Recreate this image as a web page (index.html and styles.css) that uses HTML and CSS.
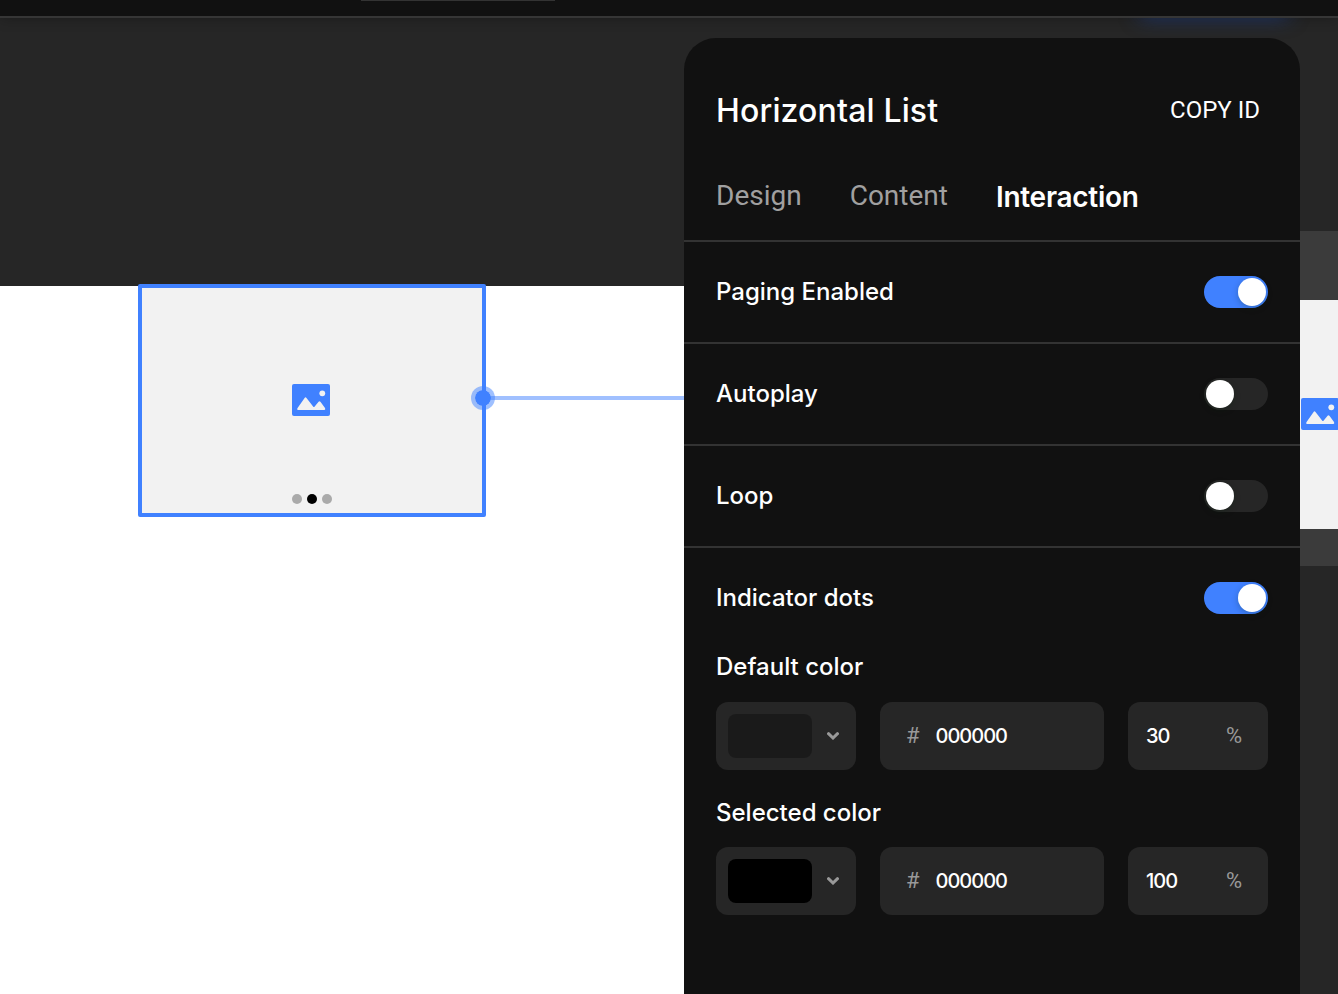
FILE: index.html
```html
<!DOCTYPE html>
<html lang="en">
<head>
<meta charset="utf-8">
<title>Horizontal List</title>
<link rel="stylesheet" href="styles.css">
</head>
<body>
<svg class="defs" width="0" height="0">
  <symbol id="picture" viewBox="0 0 38 32">
    <rect width="38" height="32" rx="2" fill="#4081ff"/>
    <circle cx="30.3" cy="9.3" r="2.9" fill="#f2f2f2"/>
    <path d="M6 26Q4.600 26 5.400 24.300L12.600 14Q13.500 12.700 14.500 14L21.300 22.800Q21.900 23.400 22.500 22.700L26.600 17.700Q27.500 16.700 28.400 17.700L33 24Q33.800 25.500 32.500 26Z" fill="#f2f2f2"/>
  </symbol>
  <symbol id="chevron" viewBox="0 0 12 8">
    <path d="M1.500 1.700L6 6L10.500 1.700" fill="none" stroke="#999" stroke-width="3" stroke-linecap="round"/>
  </symbol>
</svg>
<div class="app">
  <header class="topbar"><div class="topbar-field"></div></header>
  <main class="canvas">
    <div class="glow"></div>
    <div class="artboard"></div>
    <div class="list-frame">
      <svg class="picture"><use href="#picture"/></svg>
      <div class="dots"><i></i><i class="current"></i><i></i></div>
    </div>
    <div class="connector"></div>
    <div class="handle"></div>
    <div class="next-screen">
      <div class="next-item"><svg class="picture"><use href="#picture"/></svg></div>
    </div>
  </main>
  <aside class="panel">
    <div class="panel-head"><h1>Horizontal List</h1><button class="copy">COPY ID</button></div>
    <nav class="tabs">
      <span class="tab">Design</span><span class="tab">Content</span><span class="tab active">Interaction</span>
    </nav>
    <section class="row"><span class="label">Paging Enabled</span><span class="switch on"></span></section>
    <section class="row"><span class="label">Autoplay</span><span class="switch"></span></section>
    <section class="row"><span class="label">Loop</span><span class="switch"></span></section>
    <section class="row"><span class="label">Indicator dots</span><span class="switch on"></span></section>
    <section class="color">
      <h2>Default color</h2>
      <div class="fields">
        <div class="field picker"><span class="swatch faint"></span><svg class="chevron"><use href="#chevron"/></svg></div>
        <div class="field hex"><span class="unit">#</span><span class="value">000000</span></div>
        <div class="field alpha"><span class="value">30</span><span class="unit">%</span></div>
      </div>
    </section>
    <section class="color second">
      <h2>Selected color</h2>
      <div class="fields">
        <div class="field picker"><span class="swatch"></span><svg class="chevron"><use href="#chevron"/></svg></div>
        <div class="field hex"><span class="unit">#</span><span class="value">000000</span></div>
        <div class="field alpha"><span class="value">100</span><span class="unit">%</span></div>
      </div>
    </section>
  </aside>
</div>
</body>
</html>
```

FILE: styles.css
```css
* { box-sizing: border-box; }
body { margin: 0; background: #262626; font-family: Inter, "Liberation Sans", sans-serif; color: #fff; }
.defs { position: absolute; }
.app { position: relative; width: 1338px; height: 994px; overflow: hidden; }
.topbar { position: relative; z-index: 2; height: 18px; background: #111; border-bottom: 2px solid #363636; box-shadow: 0 0 14px rgba(0,0,0,.3); }
.topbar-field { width: 194px; height: 1px; margin-left: 361px; background: #333; }

/* Canvas: freely placed screens and nodes */
.canvas { position: absolute; inset: 0; background: #262626; }
.glow { position: absolute; left: 1140px; top: 0; width: 148px; height: 16px; box-shadow: 0 0 20px rgba(32,80,190,.65); }
.artboard { position: absolute; left: 0; top: 285.5px; width: 700px; height: 709px; background: #fff; }
.list-frame { position: absolute; left: 138px; top: 284px; width: 348px; height: 233px; border: 4px solid #4081ff; border-radius: 2px; background: #f2f2f2; display: flex; flex-direction: column; align-items: center; padding-top: 96px; }
.picture { display: block; width: 38px; height: 32px; }
.list-frame .picture { margin-right: 2px; }
.dots { display: flex; gap: 5px; margin-top: 78px; }
.dots i { width: 10px; height: 10px; border-radius: 50%; background: #aaa; }
.dots .current { background: #000; }
.connector { position: absolute; left: 486px; top: 396px; width: 208px; height: 4px; background: #a0c0ff; }
.handle { position: absolute; left: 471px; top: 386px; width: 24px; height: 24px; border: 4px solid rgba(64,129,255,.5); border-radius: 50%; background: #4081ff; background-clip: padding-box; }
.next-screen { position: absolute; left: 1290px; top: 231px; width: 48px; height: 335px; background: #3b3b3b; padding-top: 69px; overflow: hidden; }
.next-item { height: 229px; background: #f2f2f2; padding: 98px 0 0 11px; }

/* Settings panel */
.panel { position: absolute; z-index: 3; left: 684px; top: 38px; width: 616px; height: 956px; border-radius: 32px 32px 0 0; background: #111; }
.panel-head { display: flex; align-items: center; justify-content: space-between; height: 144px; padding: 0 40px 0 32px; }
h1 { margin: 0; padding-top: 1px; font-size: 32px; line-height: 40px; font-weight: 450; letter-spacing: .15px; }
.copy { padding: 0; border: 0; background: none; color: #fff; font: 24px/32px Roboto, sans-serif; }
.tabs { display: flex; height: 60px; padding-left: 32px; gap: 48px; border-bottom: 2px solid #333; line-height: 28px; font-size: 28px; }
.tab { font-family: Roboto, sans-serif; color: #a0a0a0; }
.tab.active { padding-top: 1px; font-family: Inter, sans-serif; font-weight: 600; letter-spacing: -.28px; color: #fff; }
.row { display: flex; align-items: center; justify-content: space-between; height: 102px; padding: 0 32px; border-bottom: 2px solid #333; font-size: 24px; font-weight: 500; }
.row:nth-of-type(4) { border-bottom: 0; height: 100px; }
.label { padding-bottom: 2px; }
.switch { width: 64px; height: 32px; padding: 2px; border-radius: 16px; background: #262626; display: flex; }
.switch::before { content: ""; width: 28px; height: 28px; border-radius: 50%; background: #fff; box-shadow: 0 2px 6px rgba(0,35,11,.25); }
.switch.on { background: #4081ff; justify-content: flex-end; }
.color { padding: 0 32px; }
h2 { margin: 0; padding-top: 3px; height: 54px; font-size: 24px; line-height: 32px; font-weight: 500; }
.second { padding-top: 24px; }
.second h2 { height: 53px; }
.fields { display: flex; gap: 24px; }
.field { display: flex; align-items: center; height: 68px; border-radius: 12px; background: #262626; font-size: 20px; font-weight: 500; }
.picker { width: 140px; padding-left: 12px; gap: 15px; }
.swatch { width: 84px; height: 44px; border-radius: 8px; background: #000; }
.faint { background: rgba(0,0,0,.3); }
.chevron { width: 12px; height: 8px; }
.hex { width: 224px; padding-left: 26px; gap: 16px; }
.alpha { width: 140px; padding: 0 26px 0 18px; justify-content: space-between; }
.value { letter-spacing: -1px; }
.unit { color: #999; font: 22px/28px Roboto, sans-serif; }
```
